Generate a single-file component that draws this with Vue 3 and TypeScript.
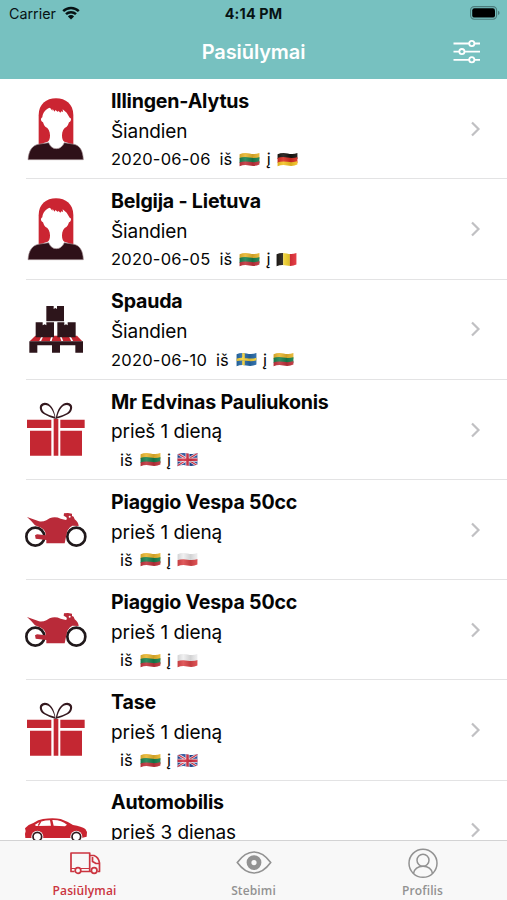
<script setup lang="ts">
import { ref } from 'vue'

type Icon = 'person' | 'pallet' | 'gift' | 'moto' | 'car'
type Flag = 'lt' | 'de' | 'be' | 'se' | 'gb' | 'pl'

interface Offer {
  icon: Icon
  title: string
  when: string
  date?: string
  from?: Flag
  to?: Flag
}

const offers: Offer[] = [
  { icon: 'person', title: 'Illingen-Alytus', when: 'Šiandien', date: '2020-06-06', from: 'lt', to: 'de' },
  { icon: 'person', title: 'Belgija - Lietuva', when: 'Šiandien', date: '2020-06-05', from: 'lt', to: 'be' },
  { icon: 'pallet', title: 'Spauda', when: 'Šiandien', date: '2020-06-10', from: 'se', to: 'lt' },
  { icon: 'gift', title: 'Mr Edvinas Pauliukonis', when: 'prieš 1 dieną', from: 'lt', to: 'gb' },
  { icon: 'moto', title: 'Piaggio Vespa 50cc', when: 'prieš 1 dieną', from: 'lt', to: 'pl' },
  { icon: 'moto', title: 'Piaggio Vespa 50cc', when: 'prieš 1 dieną', from: 'lt', to: 'pl' },
  { icon: 'gift', title: 'Tase', when: 'prieš 1 dieną', from: 'lt', to: 'gb' },
  { icon: 'car', title: 'Automobilis', when: 'prieš 3 dienas' },
]

const tabs = ['Pasiūlymai', 'Stebimi', 'Profilis']
const active = ref(0)
</script>

<template>
  <div class="screen">
    <header class="header">
      <div class="status">
        <div class="carrier">
          <span>Carrier</span>
          <svg class="wifi" viewBox="0 0 18 14">
            <path d="M1.2 5.2A11.2 11.2 0 0 1 16.8 5.2M4 8.2A7.2 7.2 0 0 1 14 8.2" fill="none" stroke="#071314" stroke-width="2.5" />
            <path d="M9 13.4L5.9 10.4A4.4 4.4 0 0 1 12.1 10.4Z" fill="#071314" />
          </svg>
        </div>
        <span class="time">4:14 PM</span>
        <svg class="battery" viewBox="0 0 30 14">
          <rect x=".6" y=".6" width="26" height="12.6" rx="3.6" fill="none" stroke="#4b7c7c" stroke-width="1.1" />
          <rect x="2.2" y="2.2" width="22.8" height="9.4" rx="2.2" fill="#000" />
          <path d="M28 4.8Q29.6 5.4 29.6 6.9T28 9Z" fill="#4b7c7c" />
        </svg>
      </div>
      <div class="navbar">
        <h1>Pasiūlymai</h1>
        <svg class="filter" viewBox="0 0 28 26">
          <g fill="none" stroke="#fff" stroke-width="1.8">
            <path d="M.5 4.5H16M21.5 4.5H27M.5 12.6H6M11.7 12.6H27M.5 20.8H16M21.5 20.8H27" />
            <circle cx="18.8" cy="4.5" r="2.6" />
            <circle cx="8.9" cy="12.6" r="2.6" />
            <circle cx="18.8" cy="20.8" r="2.6" />
          </g>
        </svg>
      </div>
    </header>

    <main class="list">
      <article v-for="(o, i) in offers" :key="i" class="row">
        <svg class="pic" viewBox="15 0 216 300">
          <g v-if="o.icon === 'person'" transform="translate(0 19)">
            <path d="M71 178V90C71 56 94 39 123 39S175 56 175 90V178Z" fill="#cb2532" />
            <path d="M82 96C83 83 91 71 105 67L112 76L113 71L119 79L121 74L129 80L130 76L136 82L139 78L144 80L143 72L155 82L164 97C171 98 168 109 162 111Q160 119 155 124C146 128 141 138 141 150C141 160 143 166 148 169L162 174L123 200L84 174L98 169C103 166 105 160 105 150C105 138 100 128 91 124Q86 119 84 111C77 109 76 98 82 96Z" fill="#fff" />
            <path d="M39 223C41 197 51 178 75 176L101 172Q108 190 124 190T148 172L172 176C195 178 204 197 205 223Z" fill="#2e1018" stroke="#a58f94" stroke-width="2" />
          </g>
          <g v-else-if="o.icon === 'pallet'" transform="translate(0 33)">
            <path d="M61 137H186L202 154H44Z" fill="#c5232e" />
            <path d="M83 137L75 154M112 137L107 154M136 137L142 154M163 137L172 154" stroke="#fff" stroke-width="5" />
            <path d="M43 154H204V188H181V166H135V188H111V166H67V188H43Z" fill="#2d151b" />
            <path d="M94 48H116V57L121 54L126 57V48H147V94H94ZM62 97H83V106L89 103L94 106V97H117V142H62ZM127 97H148V106L153 103L158 106V97H182V142H127Z" fill="#2d151b" />
          </g>
          <g v-else-if="o.icon === 'gift'" transform="translate(0 31)">
            <path d="M36 88H109V113H36ZM136 88H209V113H136ZM45 121H109V196H45ZM136 121H201V196H136ZM116 86H130V196H116Z" fill="#c42732" />
            <path fill-rule="evenodd" d="M122 86C119 55 105 37 89 37C70 38 70 61 86 71Q99 79 122 86C126 55 141 37 157 37C176 38 176 61 160 71Q146 79 122 86ZM119 79C114 58 103 44 91 44C77 45 78 58 90 68Q101 75 119 79ZM127 79C132 58 143 44 155 44C169 45 168 58 156 68Q145 75 127 79Z" fill="#35191f" />
          </g>
          <g v-else-if="o.icon === 'moto'" transform="translate(0 60)">
            <circle cx="61" cy="110" r="27" fill="#fff" stroke="#21191b" stroke-width="8" />
            <circle cx="184" cy="110" r="27" fill="#fff" stroke="#21191b" stroke-width="8" />
            <path d="M36 51L72 64Q83 66 94 61L104 55Q120 48 137 56L153 60Q158 58 154 52L146 47L147 40L159 39L171 41L171 48L176 50L179 58Q190 66 191 78L172 77Q155 87 154 106L149 130H94V120L62 116L60 106L66 103L92 106Q93 91 78 83L60 76Q52 65 36 51Z" fill="#b92a39" />
            <circle cx="164" cy="50" r="3" fill="#fff" />
          </g>
          <g v-else transform="translate(-45 -2)">
            <path d="M76 176L75 164L77 155L75 147L86 137L100 131Q115 121 129 119Q159 114 182 119Q202 126 219 137Q245 141 256 149L261 158L260 172L244 176Z" fill="#c92430" />
            <path d="M104 137Q122 123 150 123L153 139L109 140ZM157 122Q184 121 201 136L195 141L161 139Z" fill="#fff" />
            <path d="M122 126L115 139" stroke="#c92430" stroke-width="4" />
            <circle cx="112" cy="172" r="18" fill="#fff" />
            <circle cx="229" cy="172" r="18" fill="#fff" />
            <circle cx="112" cy="172" r="13" fill="#fff" stroke="#30191e" stroke-width="5" />
            <circle cx="229" cy="172" r="13" fill="#fff" stroke="#30191e" stroke-width="5" />
          </g>
        </svg>
        <div class="body">
          <h2>{{ o.title }}</h2>
          <p class="when">{{ o.when }}</p>
          <p v-if="o.from && o.to" class="route">
            <span v-if="o.date" class="date">{{ o.date }}</span>
            <span class="from">iš</span>
            <template v-for="(f, k) in [o.from, o.to]" :key="k">
              <span v-if="k === 1" class="to">į</span>
              <svg class="flag" viewBox="0 0 21 15">
                <defs>
                  <clipPath :id="`wave-${i}-${k}`">
                    <path d="M.6 2.3Q5 .3 10.5 1.5T20.4 1.1V12.6Q16 14.6 10.5 13.5T.6 14.2Z" />
                  </clipPath>
                  <linearGradient :id="`shade-${i}-${k}`">
                    <stop offset="0" stop-color="#000" stop-opacity=".12" />
                    <stop offset=".3" stop-color="#fff" stop-opacity=".12" />
                    <stop offset=".65" stop-color="#000" stop-opacity=".12" />
                    <stop offset="1" stop-color="#fff" stop-opacity=".08" />
                  </linearGradient>
                </defs>
                <g :clip-path="`url(#wave-${i}-${k})`">
                  <template v-if="f === 'lt'">
                    <path fill="#e9b52c" d="M0 0H21V7H0Z" />
                    <path fill="#16804e" d="M0 6Q5 4.5 10.5 5.5T21 5V11H0Z" />
                    <path fill="#c1303a" d="M0 10.5Q5 8.8 10.5 9.8T21 9V15H0Z" />
                  </template>
                  <template v-else-if="f === 'de'">
                    <path fill="#17130f" d="M0 0H21V7H0Z" />
                    <path fill="#d92b20" d="M0 6Q5 4.5 10.5 5.5T21 5V11H0Z" />
                    <path fill="#f5c322" d="M0 10.5Q5 8.8 10.5 9.8T21 9V15H0Z" />
                  </template>
                  <template v-else-if="f === 'be'">
                    <path fill="#1b1712" d="M0 0H7.2V15H0Z" />
                    <path fill="#f7d62e" d="M7.2 0H13.9V15H7.2Z" />
                    <path fill="#e42f38" d="M13.9 0H21V15H13.9Z" />
                  </template>
                  <template v-else-if="f === 'se'">
                    <path fill="#2468a7" d="M0 0H21V15H0Z" />
                    <path d="M7.5 0V15M0 8Q5 6.5 10.5 7.5T21 7" fill="none" stroke="#f4cf35" stroke-width="2.6" />
                  </template>
                  <template v-else-if="f === 'gb'">
                    <path fill="#234a98" d="M0 0H21V15H0Z" />
                    <path d="M0 1L21 14M0 14L21 1" stroke="#f5e9ee" stroke-width="2.6" />
                    <path d="M0 1L21 14M0 14L21 1" stroke="#d32d43" stroke-width="1.1" />
                    <path d="M10.5 0V15M0 7.7H21" stroke="#f5e9ee" stroke-width="4" />
                    <path d="M10.5 0V15M0 7.7H21" stroke="#d32d43" stroke-width="2.5" />
                  </template>
                  <template v-else>
                    <path fill="#eeeeef" d="M0 0H21V9H0Z" />
                    <path fill="#dc4447" d="M0 8.3Q5 6.7 10.5 7.7T21 7V15H0Z" />
                  </template>
                  <rect width="21" height="15" :fill="`url(#shade-${i}-${k})`" />
                </g>
              </svg>
            </template>
          </p>
        </div>
        <svg class="chevron" viewBox="0 0 12 18">
          <path d="M2 2.5L8.5 9L2 15.5" fill="none" stroke="#c0c0c3" stroke-width="2.2" />
        </svg>
      </article>
    </main>

    <nav class="tabs">
      <button v-for="(t, n) in tabs" :key="t" class="tab" :class="{ active: active === n }" @click="active = n">
        <svg class="tabicon" viewBox="0 0 36 32">
          <g v-if="n === 0" fill="none" stroke="currentColor" stroke-width="1.7" stroke-linejoin="round">
            <path d="M7.5 24.5H4V6H22.7V24.5H14M22.7 8.5H27Q31.5 10 32.5 16V24.5H30.5M22.7 24.5H24" />
            <path d="M25.5 10V14.5L29 16.5H32" />
            <path d="M4 21.5H8.5M13.5 21.5H22.7" stroke-width="1.2" />
            <circle cx="11" cy="23.5" r="2.8" fill="#f8f8f8" />
            <circle cx="27.2" cy="23.5" r="2.8" fill="#f8f8f8" />
          </g>
          <g v-else-if="n === 1" fill="none" stroke="currentColor">
            <path d="M1.3 15.5Q9 5 18 5T34.7 15.5Q27 26 18 26T1.3 15.5Z" stroke-width="1.6" />
            <circle cx="18" cy="15.6" r="5" stroke-width="4.8" />
          </g>
          <g v-else fill="none" stroke="currentColor" stroke-width="1.5">
            <circle cx="18" cy="16.3" r="14" />
            <circle cx="18" cy="13.3" r="6" />
            <path d="M8.5 26.5Q10 19.3 18 19.3T27.5 26.5" />
          </g>
        </svg>
        <span>{{ t }}</span>
      </button>
    </nav>
  </div>
</template>

<style>
body {
  background: #fff;
}
</style>

<style scoped>
.screen {
  width: 507px;
  height: 900px;
  display: flex;
  flex-direction: column;
  overflow: hidden;
  background: #fff;
  color: #050505;
  font-family: Inter, "Liberation Sans", sans-serif;
}
.header {
  flex: none;
  height: 79px;
  background: #77c1c0;
}
.status {
  height: 27px;
  padding: 0 7px 0 9px;
  display: grid;
  grid-template-columns: 1fr auto 1fr;
  align-items: center;
  font-size: 14.3px;
  color: #071314;
}
.carrier {
  display: flex;
  align-items: center;
  gap: 6px;
}
.wifi {
  width: 18px;
  height: 14px;
  margin-top: -2px;
}
.time {
  margin-left: -2px;
  font-weight: 700;
  letter-spacing: 0.2px;
}
.battery {
  width: 30px;
  height: 14px;
  margin-top: -1px;
  justify-self: end;
}
.navbar {
  height: 50px;
  padding: 0 26px;
  display: grid;
  grid-template-columns: 1fr auto 1fr;
  align-items: center;
}
h1 {
  grid-column: 2;
  margin: 0;
  font-size: 20px;
  font-weight: 600;
  letter-spacing: -0.1px;
  color: #fff;
}
.filter {
  width: 28px;
  height: 26px;
  justify-self: end;
}
.list {
  flex: 1;
  min-height: 0;
  overflow: hidden;
}
.row {
  position: relative;
  height: 100.2px;
  display: flex;
}
.row::after {
  content: "";
  position: absolute;
  left: 26px;
  right: 0;
  bottom: -0.2px;
  height: 1px;
  background: #e3e3e4;
}
.pic {
  flex: none;
  width: 72px;
  height: 100px;
  margin: 0 19px 0 20px;
}
.body {
  flex: 1;
  white-space: nowrap;
}
h2,
p {
  margin: 0;
}
h2 {
  margin-top: 7px;
  font-size: 19.6px;
  line-height: 30px;
  font-weight: 700;
  letter-spacing: -0.19px;
}
.when {
  padding-top: 0.8px;
  font-size: 19px;
  line-height: 30.4px;
  letter-spacing: -0.1px;
}
.route {
  display: flex;
  align-items: center;
  height: 24px;
  font-size: 16.5px;
}
.date {
  letter-spacing: 0.22px;
}
.from {
  margin: 0 6.8px 0 9px;
}
.to {
  margin: 0 6px 0 6.5px;
}
.flag {
  width: 21px;
  height: 15px;
}
.chevron {
  flex: none;
  align-self: center;
  width: 12px;
  height: 18px;
  margin-right: 25px;
}
.tabs {
  flex: none;
  box-sizing: border-box;
  height: 60px;
  display: grid;
  grid-template-columns: repeat(3, 1fr);
  background: #f8f8f8;
  border-top: 1px solid #d3d3d4;
}
.tab {
  display: flex;
  flex-direction: column;
  align-items: center;
  padding: 6px 0 0;
  border: 0;
  background: none;
  color: #929292;
  font-family: "Open Sans", sans-serif;
  font-size: 12px;
  font-weight: 600;
  letter-spacing: 0.12px;
}
.tab.active {
  color: #cb3540;
}
.tabicon {
  width: 36px;
  height: 32px;
}
.tab span {
  margin-top: 3px;
  line-height: 17px;
}
</style>
